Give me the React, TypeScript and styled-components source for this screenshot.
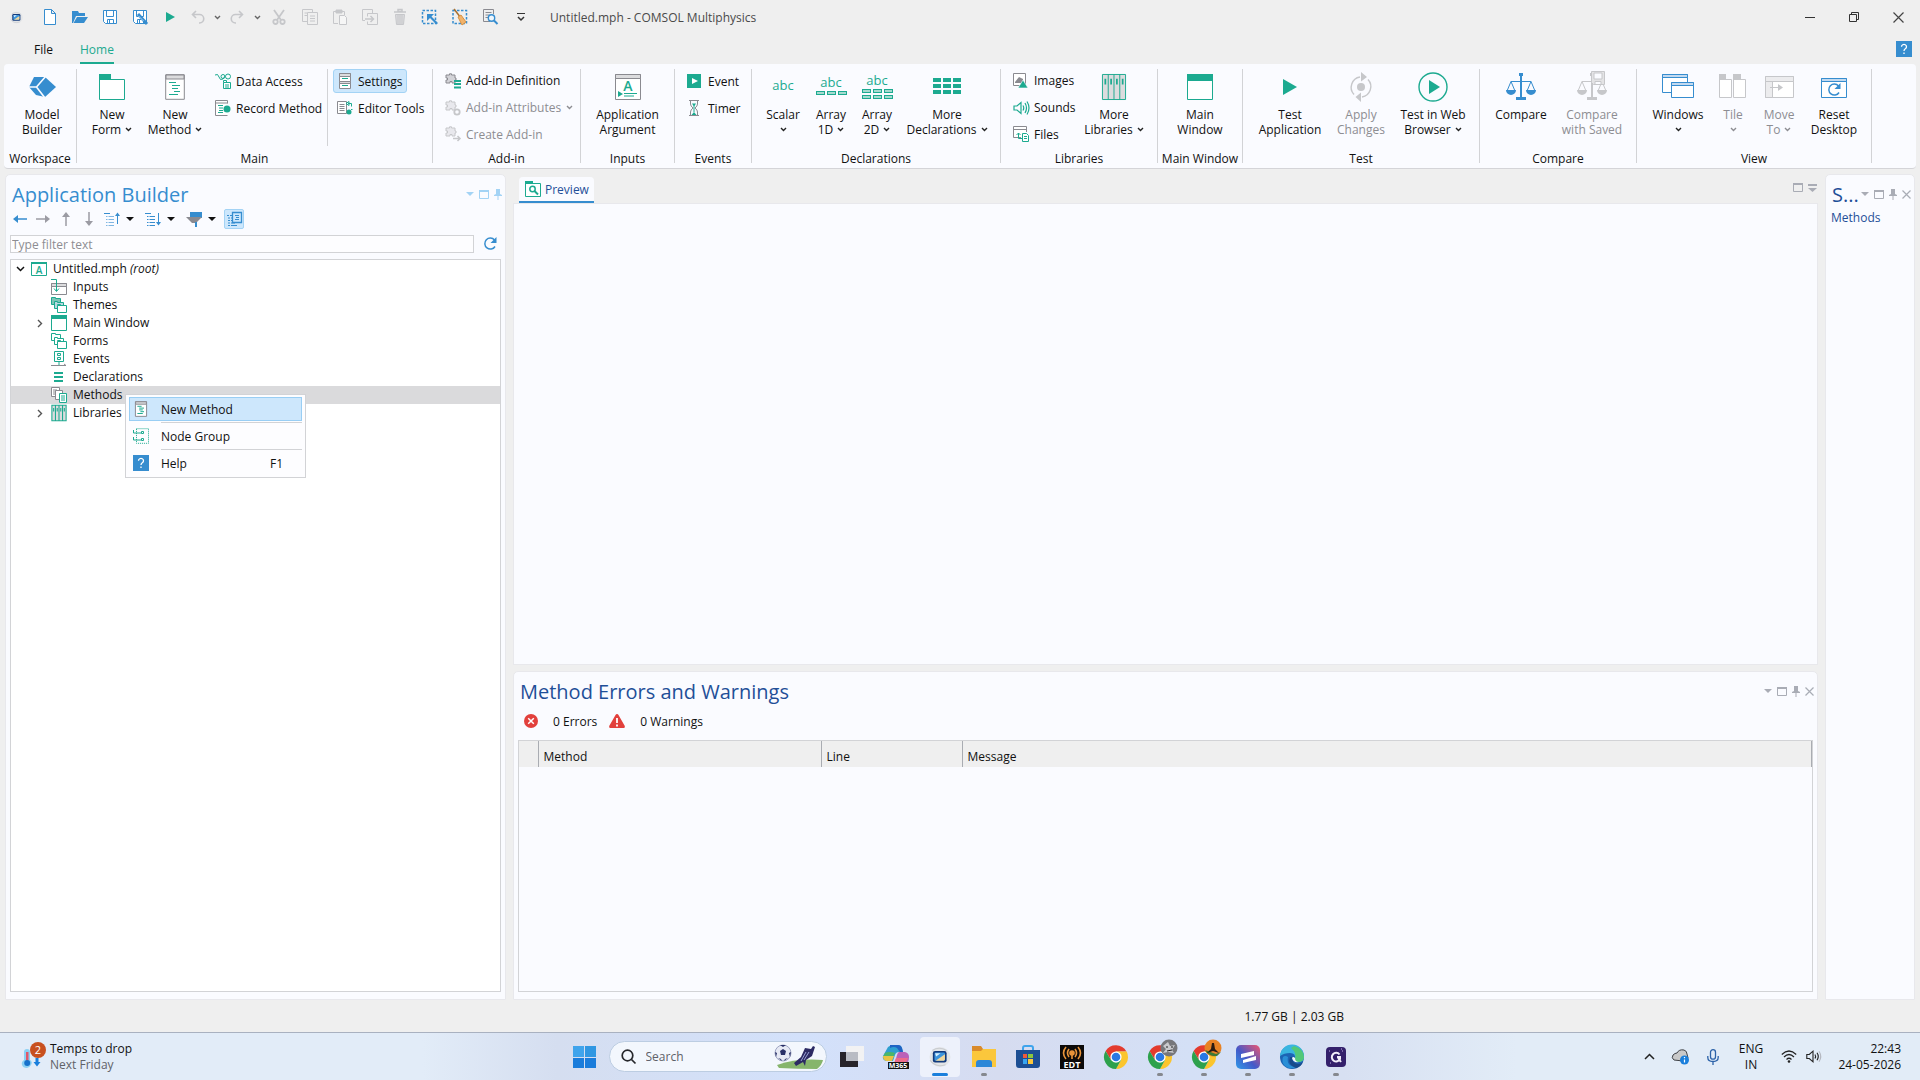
import React from "react";
import styled, { createGlobalStyle, css } from "styled-components";

const green = "#1caa90";
const blue = "#368dcf";
const grey = "#8a8a90";
const off = "#c6c7ca";
const panelBg = "#fafbff";
const line = "#d2d3d6";

const GlobalStyle = createGlobalStyle`
  * { box-sizing: border-box; }
  body { margin: 0; }
  body, button, input, table {
    font-family: "Open Sans", "Noto Sans", sans-serif;
    font-size: 12px;
    line-height: 15px;
    color: #111;
  }
  button { background: none; border: 0; padding: 0; white-space: nowrap; }
`;

/* ---------- layout ---------- */

const Page = styled.div`
  display: flex;
  flex-direction: column;
  height: 100vh;
  min-height: 640px;
  background: #efefef;
  overflow: hidden;
`;

const TitleBar = styled.header`
  display: flex;
  align-items: center;
  height: 34px;
  padding-left: 1px;
`;

const QuickAccess = styled.div`
  display: flex;
  align-items: center;
`;

const QuickButton = styled.button<{ $w?: number }>`
  display: grid;
  place-items: center;
  width: ${(p) => p.$w ?? 30}px;
  height: 30px;
`;

const AppIcon = styled.span`
  display: grid;
  place-items: center;
  width: 30px;
  margin-right: 4px;
`;

const WindowTitle = styled.h1`
  margin: 0 auto 0 13px;
  font-size: 12px;
  font-weight: 400;
  color: #4a4a4a;
`;

const CaptionButton = styled.button`
  display: grid;
  place-items: center;
  width: 44px;
  height: 34px;
`;

const TabRow = styled.nav`
  display: flex;
  align-items: stretch;
  height: 30px;
  padding: 0 8px 0 34px;
`;

const RibbonTab = styled.button<{ $active?: boolean }>`
  margin-right: 27px;
  padding-top: 2px;
  border-bottom: 2px solid ${(p) => (p.$active ? green : "transparent")};
  color: ${(p) => (p.$active ? green : "#111")};
`;

const HelpButton = styled.button`
  display: grid;
  place-items: center;
  align-self: center;
  margin-left: auto;
`;

const Ribbon = styled.section`
  display: flex;
  flex: none;
  height: 105px;
  margin: 0 4px;
  padding: 5px 0;
  background: ${panelBg};
  border-bottom: 1px solid #d4d4d8;
  border-radius: 4px;
`;

const RibbonGroup = styled.section<{ $w: number }>`
  display: flex;
  flex-direction: column;
  justify-content: space-between;
  flex: none;
  width: ${(p) => p.$w}px;
  border-right: 1px solid ${line};
`;

const GroupItems = styled.div<{ $center?: boolean }>`
  display: flex;
  align-items: flex-start;
  height: 77px;
  ${(p) => (p.$center ? "justify-content: center;" : "padding-left: 8px;")}
`;

const GroupLabel = styled.h2`
  margin: 0;
  font-size: 12px;
  line-height: 8px;
  font-weight: 400;
  text-align: center;
  white-space: nowrap;
`;

const BigButton = styled.button<{ $w?: number }>`
  flex: none;
  width: ${(p) => p.$w ?? 60}px;
  line-height: 15px;
  &:disabled { color: #8d8d92; }
`;

const BigIcon = styled.span`
  display: grid;
  place-items: center;
  height: 36px;
  margin-bottom: 2px;
`;

const LabelLine = styled.span`
  display: flex;
  align-items: center;
  justify-content: center;
  gap: 4px;
  height: 15px;
`;

const SmallColumn = styled.div<{ $w?: number; $divided?: boolean }>`
  display: flex;
  flex-direction: column;
  align-items: flex-start;
  gap: 3px;
  height: 77px;
  ${(p) => p.$w && css`width: ${p.$w}px;`}
  ${(p) => p.$divided && css`border-right: 1px solid ${line}; margin-right: 5px;`}
`;

const SmallButton = styled.button<{ $on?: boolean }>`
  display: flex;
  align-items: center;
  gap: 5px;
  height: 24px;
  padding: 0 3px;
  border: 1px solid ${(p) => (p.$on ? "#a3d3f5" : "transparent")};
  border-radius: 3px;
  background: ${(p) => (p.$on ? "#cde7fc" : "transparent")};
  &:disabled { color: #8d8d92; }
`;

const Workspace = styled.main`
  flex: 1;
  min-height: 0;
  display: grid;
  grid-template-columns: 501px minmax(0, 1fr) 90px;
  gap: 7px;
  padding: 5px 5px 0;
`;

const Panel = styled.section`
  display: flex;
  flex-direction: column;
  min-width: 0;
  min-height: 0;
  background: ${panelBg};
  border: 1px solid #e8e8ec;
  border-radius: 5px 5px 0 0;
`;

const PanelHead = styled.div`
  display: flex;
  align-items: center;
  height: 34px;
  padding: 6px 3px 0 6px;
`;

const PanelTitle = styled.h2<{ $color: string }>`
  margin: 0 auto 0 0;
  font-size: 20px;
  line-height: 28px;
  font-weight: 400;
  white-space: nowrap;
  color: ${(p) => p.$color};
`;

const PanelTools = styled.div`
  display: flex;
  align-items: center;
  gap: 5px;
  height: 28px;
  padding-bottom: 2px;
`;

const ToolButton = styled.button`
  display: grid;
  place-items: center;
`;

const TreeToolbar = styled.div`
  display: flex;
  align-items: center;
  height: 20px;
  padding-left: 7px;
`;

const TreeTool = styled.button<{ $w: number; $on?: boolean }>`
  display: flex;
  align-items: center;
  gap: 6px;
  width: ${(p) => p.$w}px;
  height: 20px;
  ${(p) => p.$on && css`
    justify-content: center;
    background: #cde7fc;
    border: 1px solid #a3d3f5;
    border-radius: 2px;
  `}
`;

const FilterRow = styled.div`
  display: flex;
  align-items: center;
  gap: 10px;
  margin: 6px 7px 6px 4px;
`;

const FilterInput = styled.input`
  flex: 1;
  height: 18px;
  padding: 0 1px;
  border: 1px solid ${line};
  background: #fdfdff;
  outline: 0;
  &::placeholder { color: #8d8d92; opacity: 1; }
`;

const TreeBox = styled.div`
  position: relative;
  flex: 1;
  margin: 0 4px 7px;
  border: 1px solid ${line};
  background: #fff;
`;

const Tree = styled.ul`
  margin: 0;
  padding: 0;
  list-style: none;
`;

const TreeRow = styled.li<{ $level: number; $selected?: boolean }>`
  display: flex;
  align-items: center;
  height: 18px;
  padding-left: ${(p) => 1 + p.$level * 20}px;
  background: ${(p) => (p.$selected ? "#dadadc" : "transparent")};
`;

const Twisty = styled.span`
  display: grid;
  place-items: center;
  width: 16px;
  margin-right: 3px;
`;

const RowText = styled.span`
  margin-left: 6px;
  padding-bottom: 1px;
`;

const ContextMenu = styled.div`
  position: absolute;
  left: 114px;
  top: 134px;
  width: 181px;
  padding: 2px 3px;
  background: #fdfdff;
  border: 1px solid ${line};
`;

const MenuItem = styled.button<{ $hot?: boolean }>`
  display: grid;
  grid-template-columns: 31px 1fr 31px;
  align-items: center;
  width: 100%;
  height: 24px;
  padding: 0;
  text-align: left;
  border: 1px solid ${(p) => (p.$hot ? "#99cef4" : "transparent")};
  background: ${(p) => (p.$hot ? "#cde7fc" : "transparent")};
`;

const MenuIcon = styled.span`
  display: grid;
  place-items: center;
  width: 22px;
`;

const MenuRule = styled.hr`
  margin: 1px 0 1px 32px;
  border: 0;
  border-top: 1px solid ${line};
`;

const Center = styled.div`
  display: grid;
  grid-template-rows: 29px 462fr 335fr;
  min-width: 0;
  min-height: 0;
`;

const TabStrip = styled.div`
  display: flex;
  align-items: flex-end;
  padding: 0 1px 0 6px;
`;

const ViewTab = styled.button`
  display: flex;
  align-items: center;
  gap: 4px;
  height: 26px;
  padding: 0 5px 0 6px;
  border-bottom: 2px solid ${blue};
  border-radius: 4px 4px 0 0;
  background: ${panelBg};
  color: #1f4f98;
`;

const StripTools = styled.div`
  display: flex;
  gap: 5px;
  margin: 0 0 11px auto;
`;

const PreviewArea = styled.section`
  background: ${panelBg};
  border: 1px solid #e8e8ec;
`;

const ErrorPanel = styled(Panel)`
  margin-top: 6px;
`;

const Counters = styled.div`
  display: flex;
  align-items: center;
  height: 30px;
  padding-left: 10px;
`;

const Counter = styled.span`
  display: flex;
  align-items: center;
  gap: 15px;
  margin-right: 12px;
`;

const TableBox = styled.div`
  flex: 1;
  margin: 4px 4px 7px;
  border: 1px solid ${line};
`;

const LogTable = styled.table`
  width: 100%;
  border-collapse: collapse;
  table-layout: fixed;
`;

const Th = styled.th<{ $w?: number }>`
  ${(p) => p.$w && css`width: ${p.$w}px;`}
  height: 26px;
  padding: 4px 5px 0;
  text-align: left;
  font-weight: 400;
  background: #efefef;
  border-right: 1px solid #a9acb2;
`;

const SideText = styled.p`
  margin: 0;
  padding-left: 5px;
  font-size: 12px;
  line-height: 18px;
  color: #1f4f98;
`;

const StatusBar = styled.footer`
  display: flex;
  align-items: center;
  justify-content: flex-end;
  height: 32px;
  padding-right: 30%;
`;

/* ---------- taskbar ---------- */

const Taskbar = styled.nav`
  display: grid;
  grid-template-columns: 1fr auto 1fr;
  align-items: center;
  flex: none;
  height: 48px;
  border-top: 1px solid #a9b1c0;
  background: linear-gradient(90deg, #e2ecf8 0%, #e2ecf8 22%, #d5def0 29%, #d3e1fb 42%, #d6dcf0 52%, #d4e0f6 62%, #d7e0f2 70%, #e2ecf7 79%, #e2ecf7 100%);
`;

const Weather = styled.button`
  display: flex;
  align-items: center;
  gap: 4px;
  padding-left: 20px;
  text-align: left;
  line-height: 16px;
`;

const Muted = styled.span`
  display: block;
  color: #5f6268;
`;

const Apps = styled.div`
  display: flex;
  align-items: center;
`;

const AppButton = styled.button<{ $run?: boolean; $active?: boolean }>`
  position: relative;
  display: grid;
  place-items: center;
  width: 40px;
  height: 40px;
  margin: 0 2px;
  border-radius: 4px;
  background: ${(p) => (p.$active ? "#edf1fb" : "transparent")};
  ${(p) => (p.$run || p.$active) && css`
    &::after {
      content: "";
      position: absolute;
      bottom: 1px;
      width: ${p.$active ? 16 : 6}px;
      height: 3px;
      border-radius: 2px;
      background: ${p.$active ? "#1a7fdc" : "#85888e"};
    }
  `}
`;

const SearchBox = styled.label`
  display: flex;
  align-items: center;
  gap: 10px;
  width: 218px;
  height: 31px;
  margin: 0 3px 0 2px;
  padding: 0 2px 0 11px;
  border: 1px solid #bccde2;
  border-radius: 16px;
  background: #f3f7fd;
`;

const SearchInput = styled.input`
  flex: 1;
  min-width: 0;
  border: 0;
  padding: 0;
  outline: 0;
  background: none;
  font-size: 12px;
  &::placeholder { color: #5f6268; opacity: 1; }
`;

const Tray = styled.div`
  display: flex;
  align-items: center;
  justify-content: flex-end;
  padding-right: 19px;
`;

const TrayButton = styled.button<{ $w: number; $align?: string }>`
  display: grid;
  place-items: center;
  justify-content: ${(p) => p.$align ?? "center"};
  width: ${(p) => p.$w}px;
  line-height: 16px;
  text-align: ${(p) => (p.$align === "end" ? "right" : "center")};
`;

const Drawing = styled.svg`
  overflow: visible;
`;

/* ---------- icons ---------- */

type IconProps = { w?: number; h?: number; c?: string; sw?: number; vb?: string; children?: React.ReactNode };

const Icon = ({ w = 16, h = w, c = blue, sw = 1, vb, children }: IconProps) => (
  <Drawing width={w} height={h} viewBox={vb ?? `0 0 ${w} ${h}`} fill="none" stroke={c} strokeWidth={sw} aria-hidden="true">
    {children}
  </Drawing>
);

const Chevron = ({ c = "#222" }: { c?: string }) => (
  <Icon w={7} h={5} c={c} sw={1.4}><path d="M1 1l2.5 2.5L6 1" /></Icon>
);

const Caret = ({ c = "#111" }: { c?: string }) => (
  <Icon w={8} h={4} c="none"><path d="M0 0h8L4 4z" fill={c} /></Icon>
);

const ComsolIcon = ({ s = 16 }: { s?: number }) => (
  <Icon w={s} vb="0 0 20 20" c="none">
    <ellipse cx="10" cy="10" rx="9.5" ry="9" fill="#e3e5e7" />
    <path d="M1 13q5 7 14 4M3 4q6-4 13 0" stroke="#c9ccd0" />
    <rect x="3.500" y="4.500" width="12.500" height="10.500" rx="2" fill="#123a7c" />
    <rect x="5" y="6" width="9.500" height="7.500" rx="1" fill="#3d95dc" />
    <path d="M6 13.500l8.500-6v5l-1 1z" fill="#f2d79a" />
    <path d="M5.500 6.500h5l-4 3z" fill="#d9f1ff" />
  </Icon>
);

const HelpIcon = () => (
  <Icon w={16} c="none">
    <rect width="16" height="16" fill={blue} />
    <path d="M5.500 5.700a2.500 2.300 0 1 1 3.800 2c-.9.600-1.300 1-1.300 2.200M8 11.500v1.500" stroke="#fff" strokeWidth="1.300" />
  </Icon>
);

const NewFile = () => <Icon w={14} h={16}><path d="M1.500.5h7l4 4v11h-11zM8.500.5v4h4" fill="#fff" /></Icon>;
const OpenFile = () => <Icon c="none"><path d="M0 2h6l1 2h6v3H4l-3 7H0z" fill={blue} /><path d="M5 8h11l-4 6H1.500z" fill={blue} /></Icon>;
const SaveShape = ({ c = blue }: { c?: string }) => (
  <g stroke={c}><path d="M1.500 1.500h13v13h-11l-2-2z" fill="#fff" /><path d="M4.500 1.500h7v6h-7z" /><path d="M5.500 14.500v-4h6v4M7.500 11v3" /></g>
);
const Save = () => <Icon><SaveShape /></Icon>;
const SaveAs = () => <Icon><SaveShape /><path d="M6 5l9 10" stroke={blue} strokeWidth="3" /><path d="M6.500 7l5 5" stroke="#a8d2f2" /></Icon>;
const PlaySmall = () => <Icon w={9} h={10} c="none"><path d="M0 0l9 5-9 5z" fill={green} /></Icon>;
const Undo = () => <Icon w={14} h={14} c={off} sw={1.6}><path d="M5 1L1.500 4.500 5 8M2 4.500h6.500a4 4 0 0 1 0 8.500H8" /></Icon>;
const Redo = () => <Icon w={14} h={14} c={off} sw={1.6}><path d="M9 1l3.500 3.500L9 8M12 4.500H5.500a4 4 0 0 0 0 8.500H6" /></Icon>;
const Cut = () => <Icon w={14} h={16} c={off} sw={1.8}><path d="M2 1l7 10M12 1L5 11" /><circle cx="3.500" cy="12.800" r="2.200" /><circle cx="10.500" cy="12.800" r="2.200" /></Icon>;
const Copy = () => <Icon c={off}><path d="M5 12.500H.5V.5h10V3" /><path d="M5.500 3.500h10v12h-10zM8 7h5M8 9.500h5M8 12h5M2.500 4H5M2.500 6.500H5" /></Icon>;
const Paste = () => <Icon c={off}><path d="M6 14.500H1.500v-12h11V6" /><path d="M4 1h6v3H4z" fill={off} /><path d="M7.500 6.500h5l2 2v7h-7z" fill="#f6f6f6" /></Icon>;
const Duplicate = () => <Icon c={off}><path d="M3 11.500H.5V.5h10V4" /><path d="M5.500 4.500h10v11h-10v-3M5.500 4.500v3" /><path d="M3 10h8M8.500 7l3 3-3 3" strokeWidth="1.500" /></Icon>;
const Trash = () => <Icon w={12} h={16} c={off}><path d="M4 .5h4v2H4zM0 3h12" strokeWidth="1.500" /><path d="M1.500 5.500h9l-1 10h-7zM4 6v9M6 6v9M8 6v9" fill="#dcdcde" /></Icon>;
const SelectBox = () => <Icon><path d="M.5 1.500h13v13H.5z" strokeDasharray="2.500 1.500" strokeWidth="1.500" /><path d="M5 5h7L9.500 7.500 16 14l-1.500 1.500L8 9l-3 3z" fill={blue} stroke="none" /></Icon>;
const ClearSelect = () => <Icon><path d="M1 1.500h13.500v13H1z" strokeDasharray="2.500 1.500" strokeWidth="1.500" /><path d="M2 0l7 9" stroke="#a9702f" strokeWidth="1.500" /><path d="M6 8l3-2 5 7-4 3z" fill="#f2b36b" stroke="#d89242" /></Icon>;
const FindPage = () => <Icon><path d="M8 12.500H1.500V.5h10V5" stroke={grey} /><path d="M3.500 3.500h6M3.500 6h4M3.500 8.500h3" stroke={grey} /><circle cx="9.500" cy="9" r="3.200" fill="#eef6fc" strokeWidth="1.400" /><path d="M12 11.500l3.500 3.500" strokeWidth="2" /></Icon>;
const MoreBar = () => <Icon w={8} h={9} c="#333"><path d="M0 .5h8" /><path d="M1 4l3 3 3-3" strokeWidth="1.500" /></Icon>;

const ModelBuilder = () => (
  <Icon w={27} h={22} c="none">
    <path d="M0 11L5 1h11l11 10-11 10-9-2z" fill={blue} />
    <path d="M0 11h7.500M17 0L7.500 11 16 22" stroke={panelBg} strokeWidth="1.600" />
  </Icon>
);
const NewForm = () => <Icon w={26} h={26} c={green}><path d="M.5 5.500h25v20H.5z" fill="#fff" /><path d="M0 0h12v6H0z" fill={green} stroke="none" /></Icon>;
const MethodIcon = ({ s = 26 }: { s?: number }) => (
  <Icon w={Math.round((s * 20) / 26)} h={s} vb="0 0 20 26" c={grey} sw={26 / s}>
    <path d="M.7.700h18.600v24.600H.7z" fill="#fff" /><path d="M1 1h18v4H1z" fill="#dcdcde" />
    <path d="M4 8.500h7M7 11.500h8M7 14.500h6M9 17.500h6M4 20.500h9" stroke={green} />
  </Icon>
);
const DataAccess = () => <Icon w={16} c={green}><path d="M0 2q3-2 4 2t4 2l2-3" /><circle cx="8" cy="3.500" r="2" /><circle cx="13" cy="3.500" r="2.500" /><path d="M8.500 9.500h7v6h-7zM8.500 9.500v-2h3v2M10 12h4M10 14h4" fill="#fff" /></Icon>;
const RecordMethod = () => <Icon c={grey}><path d="M12.500 15.500H.5V.5h12v3M.5 3h12" fill="#fff" /><path d="M3 5.500h5M4 8h4M4 10.500h4M3 12.500h5" stroke={green} /><circle cx="12" cy="9" r="3.500" fill={green} stroke="none" /></Icon>;
const SettingsIcon = () => <Icon c={grey}><path d="M2.500.5h11v15h-11z" fill="#fff" /><path d="M2.500.5h11v3h-11zM2.500 8.500h11v2h-11z" fill="#dcdcde" /><path d="M5 5.500h6M5 12.500h6" stroke={green} /></Icon>;
const EditorTools = () => <Icon c={grey}><path d="M.5 1.500h9v12h-9z" fill="#fff" /><path d="M2.500 4.500h5M2.500 6.500h5M2.500 8.500h5M2.500 10.500h5" /><path d="M11 3.500h3.500v3M9 3.500l3-2v4z" stroke={green} /><circle cx="12" cy="12" r="2.500" fill={green} stroke="none" /><path d="M14 9.500h1.500" stroke={green} /></Icon>;
const Puzzle = ({ c }: { c: string }) => <path d="M1 2h3.500V.8h2V2h3.500v3h1v2h-1v3H7V8.500H5V10H1V7h1.500V5H1z" fill={c} fillOpacity=".35" stroke={c} />;
const AddinDef = () => <Icon c={grey}><Puzzle c={grey} /><path d="M9 8h7M9 11h7M9 14.500h7" stroke={green} strokeWidth="2" /></Icon>;
const AddinAttr = () => <Icon c={off}><Puzzle c={off} /><circle cx="12" cy="12" r="2.700" fill={panelBg} strokeWidth="1.800" /></Icon>;
const AddinCreate = () => <Icon c={off}><Puzzle c={off} /><path d="M8 12.500h7M12.500 10l2.500 2.500-2.500 2.500" strokeWidth="1.500" /></Icon>;

const svgText = (x: number, y: number, t: string, size = 13, fill = green, weight = 400) => (
  <text x={x} y={y} fontSize={size} fill={fill} stroke="none" fontWeight={weight} textAnchor="middle" fontFamily="Open Sans, sans-serif">{t}</text>
);
const ArgIcon = () => <Icon w={26} h={26} c={grey}><path d="M.5.5h25v25H.5z" fill="#fff" /><path d="M.5.5h25v4H.5z" fill="#dcdcde" />{svgText(13, 17, "A", 14, green, 600)}<path d="M3 17l5 3-5 3z" fill={green} stroke="none" /><path d="M9 19.500h13M9 22h10" stroke={green} /></Icon>;
const EventIcon = () => <Icon c="none"><rect x="0" y="1" width="14" height="14" fill={green} /><path d="M5 5l6 3-6 3z" fill="#fff" /></Icon>;
const TimerIcon = () => <Icon c={grey}><path d="M2 .5h10M2 15.500h10M3.500 1v3q0 2 2.500 4-2.500 2-2.500 4v3M10.500 1v3q0 2-2.500 4 2.500 2 2.500 4v3" /><path d="M5 3.500h4L7.500 6h-1zM6.500 5h1v7h-1zM4.500 15l2.500-3 2.500 3z" fill={green} stroke="none" /></Icon>;
const Scalar = () => <Icon w={30} h={28}>{svgText(15, 17, "abc", 13)}</Icon>;
const cells = (y: number) => [0, 11, 22].map((x) => <rect key={`${x}-${y}`} x={x + 0.5} y={y + 0.5} width="8" height="3" fill="#a5dacf" stroke={green} />);
const Array1 = () => <Icon w={31} h={28}>{svgText(15, 14, "abc", 13)}{cells(18)}</Icon>;
const Array2 = () => <Icon w={31} h={28}>{svgText(15, 12, "abc", 13)}{cells(16)}{cells(22)}</Icon>;
const Grid = () => <Icon w={28} h={26} c="none">{[4, 10, 16].map((y) => [0, 10, 20].map((x) => <rect key={`${x}-${y}`} x={x} y={y} width="8" height="4" fill={green} />))}</Icon>;
const ImagesIcon = () => <Icon c={grey}><path d="M.5.5h12v12H.5z" fill="#fff" /><path d="M2 9l4-5 4 2v4H2z" fill={grey} stroke="none" /><path d="M10 7l5 8H5z" fill={green} stroke={panelBg} strokeWidth=".6" /></Icon>;
const SoundsIcon = () => <Icon c={green} sw={1.2}><path d="M1 6h3l4-3.500v11L4 10H1zM10 5.500q1.500 2.500 0 5M12 3q3 5 0 10M14 1.500q4 6.500 0 13" /></Icon>;
const FilesIcon = () => <Icon c={grey}><path d="M8 11.500H.5V.5h13V6M.5 3.500h13" fill="#fff" /><path d="M5.500 7v5.500H9M3.500 9l2-2 2 2" stroke={green} /><path d="M9.500 7.500h4l2 2v6h-6zM11 10.500h3M11 12.500h3" stroke={green} fill="#fff" /></Icon>;
const LibraryIcon = ({ s = 26 }: { s?: number }) => (
  <Icon w={s} h={s} vb="0 0 26 27" c={green} sw={s > 20 ? 1 : 1.8}>
    <path d="M1 .5h24v26H1zM7 .5v26M13 .5v26M19 .5v26" fill="#dcdcde" />
    <path d="M4 5v6M10 5v6M16 5v6M22 5v6" strokeWidth="1.800" />
  </Icon>
);
const WindowIcon = () => <Icon w={26} h={26} c={green}><path d="M.5.5h25v25H.5z" fill="#fff" /><path d="M0 0h26v7H0z" fill={green} stroke="none" /></Icon>;
const TestIcon = () => <Icon w={14} h={16} c="none"><path d="M0 0l14 8-14 8z" fill={green} /></Icon>;
const ApplyIcon = () => <Icon w={24} h={30} c={off}><path d="M11 5A10.500 10.500 0 0 0 5 22.500M13 25a10.500 10.500 0 0 0 6-17.500" strokeWidth="1.400" /><circle cx="12" cy="15" r="4" fill={off} stroke="none" /><path d="M12 0l6 5-6 4.500zM12 20.500V30l-5.500-5z" fill={off} stroke="none" /></Icon>;
const WebTest = () => <Icon w={30} h={30} c={green}><circle cx="15" cy="15" r="14" strokeWidth="1.400" /><path d="M11 8l11 7-11 7z" fill={green} stroke="none" /></Icon>;
const Scales = ({ c = blue }: { c?: string }) => (
  <g stroke={c}>
    <path d="M15 3v23" strokeWidth="2" /><path d="M5 9.500h20M5 9.500L1 19M5 9.500L9 19M25 9.500L21 19M25 9.500L29 19" />
    <path d="M0 18h10a5 5 0 0 1-10 0zM20 18h10a5 5 0 0 1-10 0zM10 25h10v3H10zM13 1h4v3h-4z" fill={c} stroke="none" />
  </g>
);
const CompareIcon = () => <Icon w={30} h={30}><Scales /></Icon>;
const CompareSaved = () => <Icon w={30} h={30} c={off}><Scales c={off} /><path d="M14.500-.5h13v13h-11l-2-2z" fill="#e3e3e5" /><path d="M17 1h8v6h-8z" fill={panelBg} /><path d="M18 9.500h6v3h-6z" fill={panelBg} /></Icon>;
const WindowsIcon = () => <Icon w={32} h={26}><path d="M.5.5h25v18H.5z" fill="#fff" /><path d="M.5.5h25v3H.5z" fill="#c3daf0" /><path d="M9.500 8.500h22v15h-22z" fill="#fff" /><path d="M9.500 8.500h22v3h-22z" fill="#c3daf0" /></Icon>;
const TileIcon = () => <Icon w={28} h={26} c={off}><path d="M.5 5.500h12v18H.5zM14.500 5.500h12v18h-12z" fill="#fff" /><path d="M0 0h7v6H0zM14 0h8v6h-8z" fill={off} stroke="none" /></Icon>;
const MoveIcon = () => <Icon w={29} h={24} c={off}><path d="M.5 1.500h28v21H.5z" fill="#fff" /><path d="M.5 1.500h28v5H.5zM.5 6.500h7v16h-7z" fill="#ececee" /><path d="M5 12.500h12" /><path d="M13 9l5 3.500-5 3.500z" fill={off} stroke="none" /></Icon>;
const Reload = ({ x = 0, y = 0 }: { x?: number; y?: number }) => (
  <g transform={`translate(${x} ${y})`} stroke={blue}><path d="M11 9.500A5.500 5.500 0 1 1 10.500 3" strokeWidth="1.500" /><path d="M12.500 0v6h-6z" fill={blue} stroke="none" /></g>
);
const ResetIcon = () => <Icon w={26} h={22}><path d="M.5 2.500h25v19H.5z" fill="#fff" /><path d="M.5 2.500h25v3H.5z" fill="#c3daf0" /><Reload x={7} y={7} /></Icon>;

const PanelMax = ({ c }: { c: string }) => <Icon w={10} h={9} c={c}><path d="M.5.5h9v8h-9z" /><path d="M0 1h10" strokeWidth="2" /></Icon>;
const Pin = ({ c }: { c: string }) => <Icon w={8} h={11} c="none"><path d="M2 0h4v5l2 1v1H4.500v4h-1V7H0V6l2-1z" fill={c} /></Icon>;
const CloseX = ({ c, s = 9 }: { c: string; s?: number }) => <Icon w={s} c={c} sw={1.2}><path d={`M.5.500L${s - 0.5} ${s - 0.5}M${s - 0.5} .5L.5 ${s - 0.5}`} /></Icon>;

const Arrow = ({ c, dir }: { c: string; dir: number }) => (
  <Icon w={14} h={14} c={c} sw={1.5}><g transform={`rotate(${dir} 7 7)`}><path d="M3 7h11" /><path d="M0 7l5-4v8z" fill={c} stroke="none" /></g></Icon>
);
const ListArrow = ({ up }: { up?: boolean }) => (
  <Icon w={16} h={14} c={up ? "#7fb6e2" : blue}>
    <path d="M0 1.500h6M2 4.500h8M2 7.500h8M2 10.500h8M2 13.500h8" strokeDasharray="1.500 1 20" />
    <path d="M0 1.500h6" stroke={blue} />
    <path d="M13.500 1v11" stroke={blue} />
    <path d={up ? "M11 4l2.500-3.500L16 4z" : "M11 10l2.500 3.500L16 10z"} fill={blue} stroke="none" />
  </Icon>
);
const FilterIcon = () => <Icon w={16} c="none"><path d="M4 1h12v6H4z" fill={blue} /><path d="M0 6h16l-6 6H6z" fill={grey} /><path d="M9 11h2v5H9z" fill={blue} /></Icon>;
const ToggleIcon = () => <Icon><path d="M1 4.500h5M2 7h4M2 9.500h4M2 12h7M2 14.500h9" strokeDasharray="2 1 20" /><path d="M6.500 1.500h9v10h-9z" fill="#cde7fc" strokeWidth="1.300" /><path d="M9 4.500h4M10 6.500h3M9 8.500h4" /></Icon>;

const RootIcon = () => <Icon w={16} h={14} c={green}><path d="M.5.5h15v13H.5z" fill="#fff" /><path d="M0 1h16" strokeWidth="2" />{svgText(8, 12, "A", 10, green, 600)}</Icon>;
const InputsIcon = () => <Icon c={grey}><path d="M.5 4.500h15v11H.5z" fill="#fff" /><path d="M.5 4.500h15v3H.5z" fill="#dcdcde" /><path d="M0 .5h5.500V12M3 9.500l2.500 3 2.500-3" stroke={green} /></Icon>;
const Stack = ({ fill }: { fill: string }) => <Icon c={green}><path d="M.5.500h4v1h5v6h-9z" fill={fill} /><path d="M3.500 4.500h3v1h6v6h-9z" fill={fill === "#fff" ? "#fff" : "#b9d9e0"} /><path d="M6.500 8.500h9v7h-9zM6.500 8.500v-1h3v1" fill="#fff" /></Icon>;
const WindowSmall = () => <Icon c={green}><path d="M.5.5h15v15H.5z" fill="#fff" /><path d="M0 2h16" strokeWidth="4" /></Icon>;
const EventsIcon = () => <Icon c={green}><path d="M3.500.5h9v10h-9zM6.500 2.500h3v2h-3zM6.500 6.500h3v2h-3zM8 11v3" fill="#fff" /><path d="M0 14.500h15M13 13l2 1.500" stroke={grey} /></Icon>;
const DeclIcon = () => <Icon c={green} sw={2}><path d="M3 4h9M3 8h9M3 12h9" /></Icon>;
const MethodsIcon = () => <Icon c={grey}><path d="M.5.5h8v9h-8z" fill="#fff" /><path d="M4.500 3.500h7v9h-7zM2 3h4M2 5h2M2 7h2" fill="#fff" /><path d="M8.500 6.500h7v9h-7zM10 9h4M10 11h4M10 13h4" fill="#fff" stroke={green} /></Icon>;
const NodeGroup = () => <Icon c={green}><path d="M3.500.7h12v14.600h-12z" strokeDasharray="1 1" /><path d="M.5 2v3h8M.5 9v3h8" /><path d="M8.500 3.500h2v2h-2zM8.500 10.500h2v2h-2z" fill="#fff" /></Icon>;
const PreviewIcon = () => <Icon c={green}><path d="M.5 2.500h15v13H.5z" fill="#fff" /><path d="M0 0h8v3H0z" fill={green} stroke="none" /><circle cx="7.500" cy="8" r="2.700" strokeWidth="1.500" /><path d="M9.500 10l3.500 3.500" strokeWidth="2" /></Icon>;

const ErrorIcon = () => <Icon w={14} c="none"><circle cx="7" cy="7" r="7" fill="#e2403c" /><path d="M4.200 4.200l5.600 5.600M9.800 4.200L4.200 9.800" stroke="#fff" strokeWidth="1.500" /></Icon>;
const WarnIcon = () => <Icon w={16} h={14} c="none"><path d="M8 0q1 0 1.500 1l6.300 11q.5 2-1 2H1.200q-1.500 0-1-2L6.500 1Q7 0 8 0z" fill="#e2403c" /><path d="M8 4v5M8 10.500v2" stroke="#fff" strokeWidth="1.800" /></Icon>;

const WinLogo = () => <Icon w={24} c="none"><path d="M0 1h11v11H0z" fill="#3fa4ec" /><path d="M12 1h11v11H12z" fill="#3097e2" /><path d="M0 13h11v10H0zM12 13h11v10H12z" fill="#1a7cdb" /></Icon>;
const SearchGlass = () => <Icon w={15} c="#26272b" sw={1.7}><circle cx="6.500" cy="6.500" r="5.300" /><path d="M10.500 10.500l4 4" /></Icon>;
const Football = () => (
  <Icon w={50} h={26} c="none">
    <path d="M3 21q20-7 46-5-1 5-6 9-20 0-38-1z" fill="#86b56c" />
    <circle cx="9" cy="9" r="8" fill="#e6e9f4" stroke="#8c93b5" strokeWidth=".8" />
    <path d="M6 7l3-2 3 2-1 4H7zM1 8l2 1-1 4zM17 8l-2 1 1 4zM6 1h6L9 3zM4 14l3 1 1 2zM14 14l-3 1-1 2z" fill="#293067" />
    <path d="M20 19l7-6 4-9 6 1 2-3 2 1-3 9-6 4-1 6-2-4-7 4z" fill="#2c2a63" /><path d="M32 8l-5 9M35 8l-5 8" stroke="#9aa1d6" />
  </Icon>
);
const TaskView = () => <Icon w={24} c="none"><path d="M0 7h18v15H0z" fill="#27242a" /><path d="M6 1h18v15H6z" fill="#f2f2f3" /><path d="M6 7h12v9H6z" fill="#b9bcc4" /></Icon>;
const Copilot = () => (
  <Icon w={26} h={26} c="none">
    <path d="M5 3q2-2 6-2h4q3 0 4 3l1 4h-4q-3 0-4 3l-2 6H3q-4-1-3-5z" fill="#2f9fd0" />
    <path d="M7 1h8q3 0 4 3l1 4h-3L14 4q-3-2-7 0z" fill="#1f63c4" />
    <path d="M2 9q4-2 10 0l-2 4H0z" fill="#4bb66a" /><path d="M0 12h11l-2 5H3q-3-1-3-5z" fill="#e8c343" />
    <path d="M16 8h6q4 1 4 5 0 3-1 5H12l2-7q1-3 2-3z" fill="#bb62b8" /><path d="M13 14h12q-1 4-3 5H11z" fill="#ee6c8a" />
    <path d="M5 18h21v7H5z" fill="#111" />{svgText(15, 24, "M365", 7, "#fff", 700)}
  </Icon>
);
const Folder = () => <Icon w={24} c="none"><path d="M0 1h9l2 3h12v8H0z" fill="#d98a2b" /><path d="M0 6h9l2-2h13v18H0z" fill="#fbc73c" /><path d="M4 22v-4q0-3 3-3h10q3 0 3 3v4z" fill="#2c87d8" /></Icon>;
const Store = () => <Icon w={24} c="none"><path d="M7 6V3q0-2 2-2h6q2 0 2 2v3" stroke="#3fa4ec" strokeWidth="2" /><path d="M0 5h24v15q0 3-3 3H3q-3 0-3-3z" fill="#1c4f94" /><path d="M7 9h4v4H7z" fill="#ef5a3a" /><path d="M12 9h5v4h-5z" fill="#8ac73f" /><path d="M7 14h4v5H7z" fill="#38a5f0" /><path d="M12 14h5v5h-5z" fill="#fbc73c" /></Icon>;
const Edt = () => <Icon w={24} c="#e9943a" sw={1.6}><path d="M0 0h24v24H0z" fill="#0c0a09" stroke="none" /><path d="M9 4q-3 4 0 8M15 4q3 4 0 8M6 2q-5 6 0 12M18 2q5 6 0 12" /><circle cx="12" cy="8" r="2" fill="#e9943a" /><path d="M12 8v6" />{svgText(12, 23, "EDT", 9, "#fff", 700)}</Icon>;
const Chrome = ({ badge }: { badge?: "grey" | "orange" }) => (
  <Icon w={34} h={34} c="none">
    <g transform="translate(5 5)">
      <path d="M1.600 6L7 15l5-8.500H22.400A12 12 0 0 0 1.600 6z" fill="#e33b2e" />
      <path d="M12 6.500h10.700A12 12 0 0 1 12 24l5-9z" fill="#fbc52d" />
      <path d="M1.600 6L7 15l5 2.500 5-2.500-5 9A12 12 0 0 1 1.600 6z" fill="#2da14c" />
      <circle cx="12" cy="12" r="5.600" fill="#fff" /><circle cx="12" cy="12" r="4.300" fill="#2a78e4" />
    </g>
    {badge === "grey" && <g><circle cx="26" cy="8" r="8.500" fill="#77777b" /><path d="M20 6l5-4 2 4 5-1-3 5 2 3-6-1-5 1 3-4z" fill="#c9c9cc" /><path d="M23 7h2M28 7h2M24 11l5-1" stroke="#222" /></g>}
    {badge === "orange" && <g><circle cx="26" cy="8" r="8.500" fill="#e88224" /><path d="M18 10q4 7 12 6l4-4-5 2z" fill="#3d7a35" /><path d="M25 3h2l1 6 4 4-6-2-6 2 4-4z" fill="#2a1a12" /></g>}
  </Icon>
);
const Bars = () => (
  <Icon w={24} c="none">
    <defs><linearGradient id="bars" x1="0" y1="1" x2="1" y2="0"><stop offset="0" stopColor="#2f9be8" /><stop offset=".45" stopColor="#4459c9" /><stop offset="1" stopColor="#f0566f" /></linearGradient></defs>
    <rect width="24" height="24" rx="5" fill="url(#bars)" />
    <path d="M5 9l13-3v4L5 13zM7 15l13-4v4L7 18z" fill="#fff" />
  </Icon>
);
const Edge = () => (
  <Icon w={24} c="none">
    <circle cx="12" cy="12" r="12" fill="#1c64b4" /><path d="M0 11A12 12 0 0 1 24 12q0 5-6 5-4 0-3-3 1-6-5-6-6 0-10 3z" fill="#3ab5e0" /><path d="M14 1q10 3 10 11 0 5-6 5-4 0-3-3 2-6-4-11z" fill="#52c878" />
    <path d="M8 12q-2 9 8 10-6 3-11-1-4-4-2-9 2-2 5 0z" fill="#2a8fd6" /><path d="M13 12q-2 6 5 7 3 0 5-2-2 5-7 6-9-3-6-11z" fill="#174a8b" /><path d="M15 13q0 4 4 4-6 1-7-4 1-2 3 0z" fill="#eef6fc" />
  </Icon>
);
const Qapp = () => <Icon w={20} c="none"><rect width="20" height="20" rx="4" fill="#34206b" /><path d="M13.500 7.500A4.300 4.300 0 1 0 14 12v-2h-3M12 11l3 4" stroke="#f3effb" strokeWidth="2" /><path d="M3 4h1M16 4h1M4 16h1M15 2h1" stroke="#c4b3ea" /></Icon>;
const WeatherIcon = () => (
  <Icon w={26} h={30} c="none">
    <path d="M4 10q0-3 3-3t3 3v8q3 2 1 5t-4 3q-4 0-5-3t2-5z" fill="#8bd0f3" /><path d="M6 10h2.500v9H6z" fill="#e0586a" /><circle cx="7.200" cy="21" r="3" fill="#1671cb" />
    <path d="M15.500 16h3v4h2l-3.500 4.500L13.500 20h2z" fill="#1a7fdc" /><circle cx="18" cy="8" r="8" fill="#c8501f" />{svgText(18, 12, "2", 11, "#fff")}
  </Icon>
);
const CloudIcon = () => <Icon w={18} c="none"><path d="M2 12q-3-2-1-5 2-2 4-2 2-4 7-3 3 1 3 4l1 4-5 3z" fill="#c9c9c9" stroke="#3f4247" /><circle cx="12.500" cy="12" r="4.500" fill="#1a7fdc" /><path d="M12.500 11.500v3M12.500 9v1.300" stroke="#fff" strokeWidth="1.200" /></Icon>;
const Mic = () => <Icon w={12} h={16} c="#2c62a8" sw={1.3}><rect x="3.500" y=".7" width="5" height="9.500" rx="2.500" /><path d="M.8 7v1.500q0 4 5.200 4t5.200-4V7M6 12.500V16" /></Icon>;
const Wifi = () => <Icon w={16} h={13} c="#222" sw={1.2}><path d="M.8 4.500q7.200-7 14.400 0M3 7q5-5 10 0M5.500 9.500q2.500-2.500 5 0" /><circle cx="8" cy="11.500" r="1.300" fill="#222" stroke="none" /></Icon>;
const Speaker = () => <Icon w={16} h={13} c="#222" sw={1.1}><path d="M.8 4.500h2.500L7 1.200v10.600L3.300 8.500H.8zM9 4.500q1.200 2 0 4M11 2.800q2.500 3.700 0 7.400" /><path d="M13 1.200q3.500 5.300 0 10.600" stroke="#b4b8c0" /></Icon>;

/* ---------- parts ---------- */

type BigProps = { icon: React.ReactNode; a: string; b?: string; drop?: boolean; w?: number; disabled?: boolean };

const Big = ({ icon, a, b, drop, w, disabled }: BigProps) => (
  <BigButton $w={w} disabled={disabled}>
    <BigIcon>{icon}</BigIcon>
    <LabelLine>{a}</LabelLine>
    <LabelLine>{b}{drop && <Chevron c={disabled ? "#8d8d92" : "#222"} />}</LabelLine>
  </BigButton>
);

type SmallProps = { icon: React.ReactNode; text: string; on?: boolean; disabled?: boolean; drop?: boolean };

const Small = ({ icon, text, on, disabled, drop }: SmallProps) => (
  <SmallButton $on={on} disabled={disabled} aria-pressed={on}>
    {icon}{text}{drop && <Chevron c="#8d8d92" />}
  </SmallButton>
);

const Group = ({ label, w, center, children }: { label: string; w: number; center?: boolean; children: React.ReactNode }) => (
  <RibbonGroup $w={w}>
    <GroupItems $center={center}>{children}</GroupItems>
    <GroupLabel>{label}</GroupLabel>
  </RibbonGroup>
);

const WindowTools = ({ c, close }: { c: string; close?: boolean }) => (
  <PanelTools>
    <ToolButton aria-label="View menu"><Caret c={c} /></ToolButton>
    <ToolButton aria-label="Maximize"><PanelMax c={c} /></ToolButton>
    <ToolButton aria-label="Pin"><Pin c={c} /></ToolButton>
    {close && <ToolButton aria-label="Close"><CloseX c={c} /></ToolButton>}
  </PanelTools>
);

const quick: [string, React.ReactNode, number?][] = [
  ["New", <NewFile />], ["Open", <OpenFile />], ["Save", <Save />], ["Save As", <SaveAs />], ["Run", <PlaySmall />],
  ["Undo", <Undo />, 26], ["Undo list", <Chevron c="#666" />, 12], ["Redo", <Redo />, 28], ["Redo list", <Chevron c="#666" />, 12],
  ["Cut", <Cut />, 32], ["Copy", <Copy />], ["Paste", <Paste />], ["Duplicate", <Duplicate />], ["Delete", <Trash />],
  ["Select", <SelectBox />], ["Clear selection", <ClearSelect />], ["Find", <FindPage />], ["Customize", <MoreBar />, 32],
];

const nodes: { text: string; icon: React.ReactNode; open?: boolean; selected?: boolean }[] = [
  { text: "Inputs", icon: <InputsIcon /> },
  { text: "Themes", icon: <Stack fill="#7cc4b6" /> },
  { text: "Main Window", icon: <WindowSmall />, open: false },
  { text: "Forms", icon: <Stack fill="#fff" /> },
  { text: "Events", icon: <EventsIcon /> },
  { text: "Declarations", icon: <DeclIcon /> },
  { text: "Methods", icon: <MethodsIcon />, selected: true },
  { text: "Libraries", icon: <LibraryIcon s={16} />, open: false },
];

const apps: { name: string; icon: React.ReactNode; run?: boolean; active?: boolean }[] = [
  { name: "Task View", icon: <TaskView /> },
  { name: "Copilot", icon: <Copilot /> },
  { name: "COMSOL", icon: <ComsolIcon s={22} />, active: true },
  { name: "Explorer", icon: <Folder />, run: true },
  { name: "Store", icon: <Store /> },
  { name: "Electronics Desktop", icon: <Edt /> },
  { name: "Chrome", icon: <Chrome /> },
  { name: "Chrome profile 1", icon: <Chrome badge="grey" />, run: true },
  { name: "Chrome profile 2", icon: <Chrome badge="orange" />, run: true },
  { name: "Bars", icon: <Bars />, run: true },
  { name: "Edge", icon: <Edge />, run: true },
  { name: "Q", icon: <Qapp />, run: true },
];

export default function App() {
  return (
    <Page>
      <GlobalStyle />
      <TitleBar>
        <AppIcon><ComsolIcon s={13} /></AppIcon>
        <QuickAccess>
          {quick.map(([name, icon, w]) => <QuickButton key={name} $w={w} aria-label={name}>{icon}</QuickButton>)}
        </QuickAccess>
        <WindowTitle>Untitled.mph - COMSOL Multiphysics</WindowTitle>
        <CaptionButton aria-label="Minimize"><Icon w={10} h={10} c="#333"><path d="M0 5.500h10" /></Icon></CaptionButton>
        <CaptionButton aria-label="Restore"><Icon w={10} h={10} c="#333"><path d="M.5 2.500h7v7h-7zM2.500 2.500v-2h7v7h-2" /></Icon></CaptionButton>
        <CaptionButton aria-label="Close"><CloseX c="#444" s={11} /></CaptionButton>
      </TitleBar>

      <TabRow>
        <RibbonTab>File</RibbonTab>
        <RibbonTab $active>Home</RibbonTab>
        <HelpButton aria-label="Help"><HelpIcon /></HelpButton>
      </TabRow>

      <Ribbon>
        <Group label="Workspace" w={73}><Big icon={<ModelBuilder />} a="Model" b="Builder" /></Group>
        <Group label="Main" w={356}>
          <Big icon={<NewForm />} a="New" b="Form" drop w={54} />
          <Big icon={<MethodIcon />} a="New" b="Method" drop w={72} />
          <SmallColumn $w={117} $divided>
            <Small icon={<DataAccess />} text="Data Access" />
            <Small icon={<RecordMethod />} text="Record Method" />
          </SmallColumn>
          <SmallColumn>
            <Small icon={<SettingsIcon />} text="Settings" on />
            <Small icon={<EditorTools />} text="Editor Tools" />
          </SmallColumn>
        </Group>
        <Group label="Add-in" w={148}>
          <SmallColumn>
            <Small icon={<AddinDef />} text="Add-in Definition" />
            <Small icon={<AddinAttr />} text="Add-in Attributes" disabled drop />
            <Small icon={<AddinCreate />} text="Create Add-in" disabled />
          </SmallColumn>
        </Group>
        <Group label="Inputs" w={94} center><Big icon={<ArgIcon />} a="Application" b="Argument" w={70} /></Group>
        <Group label="Events" w={77}>
          <SmallColumn>
            <Small icon={<EventIcon />} text="Event" />
            <Small icon={<TimerIcon />} text="Timer" />
          </SmallColumn>
        </Group>
        <Group label="Declarations" w={249}>
          <Big icon={<Scalar />} a="Scalar" drop w={46} />
          <Big icon={<Array1 />} a="Array" b="1D" drop w={50} />
          <Big icon={<Array2 />} a="Array" b="2D" drop w={42} />
          <Big icon={<Grid />} a="More" b="Declarations" drop w={98} />
        </Group>
        <Group label="Libraries" w={157}>
          <SmallColumn $w={68}>
            <Small icon={<ImagesIcon />} text="Images" />
            <Small icon={<SoundsIcon />} text="Sounds" />
            <Small icon={<FilesIcon />} text="Files" />
          </SmallColumn>
          <Big icon={<LibraryIcon />} a="More" b="Libraries" drop w={74} />
        </Group>
        <Group label="Main Window" w={85} center><Big icon={<WindowIcon />} a="Main" b="Window" /></Group>
        <Group label="Test" w={237}>
          <Big icon={<TestIcon />} a="Test" b="Application" w={78} />
          <Big icon={<ApplyIcon />} a="Apply" b="Changes" w={64} disabled />
          <Big icon={<WebTest />} a="Test in Web" b="Browser" drop w={80} />
        </Group>
        <Group label="Compare" w={157}>
          <Big icon={<CompareIcon />} a="Compare" w={66} />
          <Big icon={<CompareSaved />} a="Compare" b="with Saved" w={76} disabled />
        </Group>
        <Group label="View" w={235}>
          <Big icon={<WindowsIcon />} a="Windows" drop w={66} />
          <Big icon={<TileIcon />} a="Tile" drop w={44} disabled />
          <Big icon={<MoveIcon />} a="Move" b="To" drop w={48} disabled />
          <Big icon={<ResetIcon />} a="Reset" b="Desktop" w={62} />
        </Group>
      </Ribbon>

      <Workspace>
        <Panel>
          <PanelHead>
            <PanelTitle $color={blue}>Application Builder</PanelTitle>
            <WindowTools c="#a3d3f5" />
          </PanelHead>
          <TreeToolbar>
            <TreeTool $w={23} aria-label="Back"><Arrow c={blue} dir={0} /></TreeTool>
            <TreeTool $w={23} aria-label="Forward"><Arrow c="#9b9ba3" dir={180} /></TreeTool>
            <TreeTool $w={23} aria-label="Move up"><Arrow c="#9b9ba3" dir={90} /></TreeTool>
            <TreeTool $w={22} aria-label="Move down"><Arrow c="#9b9ba3" dir={270} /></TreeTool>
            <TreeTool $w={41} aria-label="Collapse"><ListArrow up /><Caret /></TreeTool>
            <TreeTool $w={41} aria-label="Expand"><ListArrow /><Caret /></TreeTool>
            <TreeTool $w={38} aria-label="Filter"><FilterIcon /><Caret /></TreeTool>
            <TreeTool $w={20} $on aria-label="Node preview" aria-pressed><ToggleIcon /></TreeTool>
          </TreeToolbar>
          <FilterRow>
            <FilterInput type="text" placeholder="Type filter text" aria-label="Type filter text" />
            <ToolButton aria-label="Refresh"><Icon w={14} h={14}><Reload /></Icon></ToolButton>
          </FilterRow>
          <TreeBox>
            <Tree>
              <TreeRow $level={0}>
                <Twisty><Icon w={9} h={6} c="#111" sw={1.5}><path d="M1 1l3.500 3.500L8 1" /></Icon></Twisty>
                <RootIcon />
                <RowText>Untitled.mph <em>(root)</em></RowText>
              </TreeRow>
              {nodes.map((n) => (
                <TreeRow key={n.text} $level={1} $selected={n.selected}>
                  <Twisty>{n.open === false && <Icon w={6} h={9} c="#555" sw={1.4}><path d="M1 1l3.500 3.500L1 8" /></Icon>}</Twisty>
                  {n.icon}
                  <RowText>{n.text}</RowText>
                </TreeRow>
              ))}
            </Tree>
            <ContextMenu role="menu">
              <MenuItem $hot role="menuitem"><MenuIcon><MethodIcon s={16} /></MenuIcon>New Method</MenuItem>
              <MenuRule />
              <MenuItem role="menuitem"><MenuIcon><NodeGroup /></MenuIcon>Node Group</MenuItem>
              <MenuRule />
              <MenuItem role="menuitem"><MenuIcon><HelpIcon /></MenuIcon><span>Help</span><span>F1</span></MenuItem>
            </ContextMenu>
          </TreeBox>
        </Panel>

        <Center>
          <TabStrip>
            <ViewTab><PreviewIcon />Preview</ViewTab>
            <StripTools>
              <ToolButton aria-label="Maximize"><PanelMax c="#a9acb5" /></ToolButton>
              <ToolButton aria-label="View menu"><Icon w={9} h={8} c="#a9acb5"><path d="M0 1h9" strokeWidth="2" /><path d="M0 4h9L4.500 8z" fill="#a9acb5" stroke="none" /></Icon></ToolButton>
            </StripTools>
          </TabStrip>
          <PreviewArea aria-label="Preview" />
          <ErrorPanel>
            <PanelHead>
              <PanelTitle $color="#1f4f98">Method Errors and Warnings</PanelTitle>
              <WindowTools c="#a9acb5" close />
            </PanelHead>
            <Counters>
              <Counter><ErrorIcon />0 Errors</Counter>
              <Counter><WarnIcon />0 Warnings</Counter>
            </Counters>
            <TableBox>
              <LogTable>
                <thead>
                  <tr>
                    <Th $w={19} aria-label="Type" />
                    <Th $w={283}>Method</Th>
                    <Th $w={141}>Line</Th>
                    <Th>Message</Th>
                  </tr>
                </thead>
              </LogTable>
            </TableBox>
          </ErrorPanel>
        </Center>

        <Panel>
          <PanelHead>
            <PanelTitle $color="#1f4f98">S...</PanelTitle>
            <WindowTools c="#a9acb5" close />
          </PanelHead>
          <SideText>Methods</SideText>
        </Panel>
      </Workspace>

      <StatusBar>1.77 GB | 2.03 GB</StatusBar>

      <Taskbar>
        <Weather>
          <WeatherIcon />
          <span>Temps to drop<Muted>Next Friday</Muted></span>
        </Weather>
        <Apps>
          <AppButton aria-label="Start"><WinLogo /></AppButton>
          <SearchBox>
            <SearchGlass />
            <SearchInput type="text" placeholder="Search" aria-label="Search" />
            <Football />
          </SearchBox>
          {apps.map((a) => <AppButton key={a.name} aria-label={a.name} $run={a.run} $active={a.active}>{a.icon}</AppButton>)}
        </Apps>
        <Tray>
          <TrayButton $w={32} aria-label="Hidden icons"><Icon w={11} h={7} c="#222" sw={1.5}><path d="M1 6l4.500-4.500L10 6" /></Icon></TrayButton>
          <TrayButton $w={32} aria-label="Cloud"><CloudIcon /></TrayButton>
          <TrayButton $w={32} aria-label="Microphone"><Mic /></TrayButton>
          <TrayButton $w={44}>ENG<br />IN</TrayButton>
          <TrayButton $w={32} aria-label="Network"><Wifi /></TrayButton>
          <TrayButton $w={18} aria-label="Volume"><Speaker /></TrayButton>
          <TrayButton $w={78} $align="end">22:43<br />24-05-2026</TrayButton>
        </Tray>
      </Taskbar>
    </Page>
  );
}
